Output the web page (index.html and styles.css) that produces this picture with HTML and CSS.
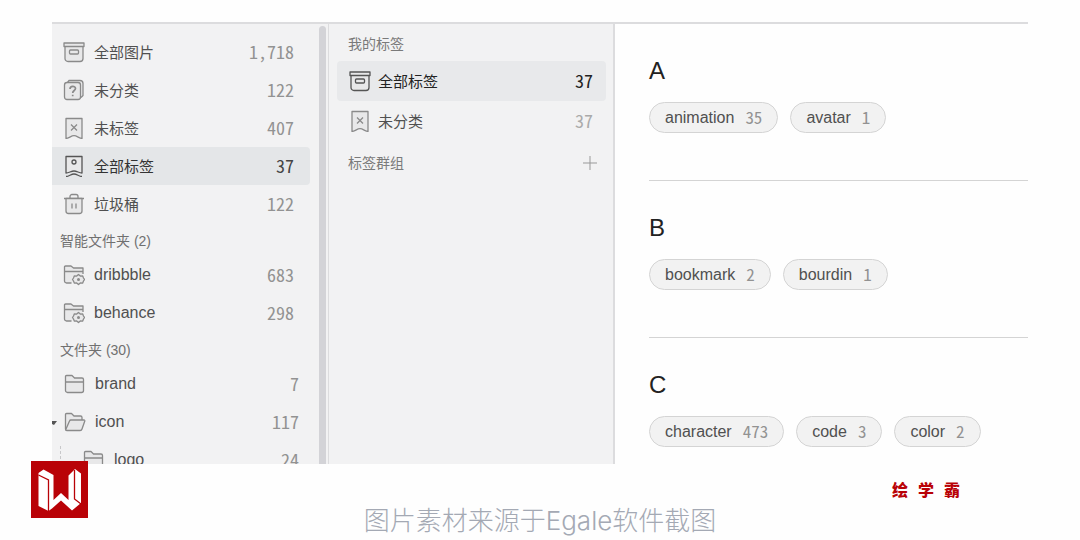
FILE: index.html
```html
<!DOCTYPE html>
<html lang="zh-CN">
<head>
<meta charset="utf-8">
<title>全部标签</title>
<link rel="stylesheet" href="styles.css">
</head>
<body>
<svg class="defs" aria-hidden="true">
  <symbol id="archive" viewBox="0 0 22 22"><path d="M1 2h20v3.500H1zM2 5.500h18v12a3 3 0 0 1-3 3H5a3 3 0 0 1-3-3z"/><rect class="bare" x="6.500" y="9" width="9" height="4" rx="1"/></symbol>
  <symbol id="question" viewBox="0 0 22 22"><path d="M4.500 3.500 6 1.500h11a3 3 0 0 1 3 3v12l-2 2"/><rect x="1.500" y="3.500" width="16" height="17" rx="2.500"/><path class="bare strong" d="M7 10c0-3.500 5.500-3.500 5.500-.5 0 2-2.800 2-2.800 4.500M9.700 15.800v1.400"/></symbol>
  <symbol id="untagged" viewBox="0 0 22 22"><path d="M3 1.500h16v20c-3-.2-5-2.800-8-2.800s-5 2.600-8 2.800z"/><path class="bare" d="m8 7.500 6 6m0-6-6 6"/></symbol>
  <symbol id="tag" viewBox="0 0 22 22"><path d="M3 1.500h16v16.500c-3 0-5-2-8-2s-5 2-8 2z"/><circle class="bare" cx="11" cy="7" r="2"/><path class="bare" d="M3 21.500c3 0 5-2.500 8-2.500s5 2.500 8 2.500"/></symbol>
  <symbol id="trash" viewBox="0 0 22 22"><path class="bare" d="M1 5.500h20M7 5V3.500a2 2 0 0 1 2-2h4a2 2 0 0 1 2 2V5"/><path d="M3 5.500h16V18a2.500 2.500 0 0 1-2.500 2.500h-11A2.500 2.500 0 0 1 3 18z"/><path class="bare" d="M9 10.500v5m4-5v5"/></symbol>
  <symbol id="smart" viewBox="0 0 22 22"><path d="M8.500 19H3.500a2 2 0 0 1-2-2V3a1 1 0 0 1 1-1H8l2.500 2H20v6M1.500 7.500H20"/><path d="m15.500 10.500 1.800 1.600 2.300-.3.900 2.200 1 1.500-1 1.500-.9 2.200-2.300-.3-1.800 1.600-1.800-1.600-2.300.3-.9-2.200-1-1.500 1-1.500.9-2.200 2.300.3z"/><circle class="dot" cx="15.500" cy="15.500" r="1.500"/></symbol>
  <symbol id="folder" viewBox="0 0 22 22"><path d="M1.500 5V3.500a1 1 0 0 1 1-1H8L10.500 5H18a1.500 1.500 0 0 1 1.500 1.500V17.500a2 2 0 0 1-2 2h-14a2 2 0 0 1-2-2zM1.500 9h18"/></symbol>
  <symbol id="open" viewBox="0 0 22 22"><path d="M2.500 19.500a1.500 1.500 0 0 1-1-1.500V3.500a1 1 0 0 1 1-1h5L10 5H16.500a1.500 1.500 0 0 1 1.500 1.500V9"/><path d="M7 9h13a.8.8 0 0 1 .8 1L18 18a2 2 0 0 1-2 1.500H3a1 1 0 0 1-1-1.500L5.500 10A1.500 1.500 0 0 1 7 9z"/></symbol>
</svg>

<main class="app">
  <nav class="sidebar" aria-label="图库">
    <a class="row" href="#all"><svg class="icon"><use href="#archive"/></svg><span class="label">全部图片</span><span class="count">1,718</span></a>
    <a class="row" href="#uncategorized"><svg class="icon"><use href="#question"/></svg><span class="label">未分类</span><span class="count">122</span></a>
    <a class="row" href="#untagged-items"><svg class="icon"><use href="#untagged"/></svg><span class="label">未标签</span><span class="count">407</span></a>
    <a class="row row-active" href="#tags" aria-current="page"><svg class="icon"><use href="#tag"/></svg><span class="label">全部标签</span><span class="count">37</span></a>
    <a class="row" href="#bin"><svg class="icon"><use href="#trash"/></svg><span class="label">垃圾桶</span><span class="count">122</span></a>
    <h2 class="heading">智能文件夹 (2)</h2>
    <a class="row row-latin" href="#dribbble"><svg class="icon"><use href="#smart"/></svg><span class="label">dribbble</span><span class="count">683</span></a>
    <a class="row row-latin" href="#behance"><svg class="icon"><use href="#smart"/></svg><span class="label">behance</span><span class="count">298</span></a>
    <h2 class="heading">文件夹 (30)</h2>
    <a class="row row-latin row-folder" href="#brand"><svg class="icon"><use href="#folder"/></svg><span class="label">brand</span><span class="count">7</span></a>
    <a class="row row-latin row-folder" href="#icon"><svg class="caret" viewBox="0 0 5 5"><path d="M0 0h5L2 4 0 3z"/></svg><svg class="icon"><use href="#open"/></svg><span class="label">icon</span><span class="count">117</span></a>
    <a class="row row-latin row-folder row-child" href="#logo"><svg class="icon"><use href="#folder"/></svg><span class="label">logo</span><span class="count">24</span></a>
    <span class="scrollbar"></span>
  </nav>

  <nav class="groups" aria-label="标签">
    <h2 class="group-heading group-first">我的标签</h2>
    <a class="group-row group-active" href="#all-tags" aria-current="page"><svg class="icon"><use href="#archive"/></svg><span class="label">全部标签</span><span class="count">37</span></a>
    <a class="group-row" href="#loose-tags"><svg class="icon"><use href="#untagged"/></svg><span class="label">未分类</span><span class="count">37</span></a>
    <div class="group-bar"><h2 class="group-heading">标签群组</h2><button class="add" type="button" aria-label="新建标签群组"><svg viewBox="0 0 14 14"><path d="M7 0v14M0 7h14"/></svg></button></div>
  </nav>

  <div class="content">
    <section class="letter">
      <h2 class="initial">A</h2>
      <div class="tags">
        <button class="pill" type="button">animation <span class="pill-count">35</span></button>
        <button class="pill" type="button">avatar <span class="pill-count">1</span></button>
      </div>
    </section>
    <section class="letter">
      <h2 class="initial">B</h2>
      <div class="tags">
        <button class="pill" type="button">bookmark <span class="pill-count">2</span></button>
        <button class="pill" type="button">bourdin <span class="pill-count">1</span></button>
      </div>
    </section>
    <section class="letter">
      <h2 class="initial">C</h2>
      <div class="tags">
        <button class="pill" type="button">character <span class="pill-count">473</span></button>
        <button class="pill" type="button">code <span class="pill-count">3</span></button>
        <button class="pill" type="button">color <span class="pill-count">2</span></button>
      </div>
    </section>
  </div>
</main>

<footer class="footer">
  <svg class="logo" viewBox="0 0 57 57" role="img" aria-label="W">
    <path class="logo-bg" d="M0 0h57v57H0z"/>
    <path class="logo-mark" d="M7.500 12 12.500 8.500 22.500 14v25L30 32l7.500 7V14.500l6.500-6.500 6 4.500V42L41 49.500l-11-10-9 8-3.500 2.500L7.500 45z"/>
    <path class="logo-cut" d="M7.500 14 17.500 19v31M43.500 9v29l6.500 5"/>
  </svg>
  <p class="brand"><span>绘</span><span>学</span><span>霸</span></p>
  <p class="caption">图片素材来源于Egale软件截图</p>
</footer>
</body>
</html>
```
FILE: styles.css
```css
* { box-sizing: border-box; }

body {
  display: flex;
  flex-direction: column;
  height: 100vh;
  margin: 0;
  background: #fefefe;
  color: #505050;
  font-family: "Liberation Sans", "Noto Sans CJK SC", sans-serif;
}

h2, p { margin: 0; font-weight: 400; }
a { color: inherit; text-decoration: none; }
.defs { position: absolute; width: 0; height: 0; }

.app {
  display: grid;
  grid-template-columns: 277px 286px 1fr;
  flex: 1;
  min-height: 0;
  margin: 22px 52px 0;
  border-top: 2px solid #dcdcde;
  overflow: hidden;
}

.sidebar {
  position: relative;
  min-height: 0;
  padding: 9px 18px 0 0;
  border-right: 1px solid #dcdcde;
  background: #f2f2f3;
  overflow: hidden;
}

.scrollbar {
  position: absolute;
  top: 2px;
  right: 2px;
  bottom: 0;
  width: 7px;
  border-radius: 4px 4px 0 0;
  background: #d3d3d7;
}

.row, .group-row {
  position: relative;
  display: flex;
  align-items: center;
  gap: 9px;
  height: 38px;
  padding: 0 16px 0 11px;
  font-size: 15px;
}
.row-latin { font-size: 16px; }
.row-folder { padding: 0 11px 0 12px; }
.row-child { padding-left: 31px; }
.row-child::before {
  content: "";
  position: absolute;
  top: 5px;
  bottom: 0;
  left: 8px;
  border-left: 1px dashed #c8c8ca;
}
.row-active {
  border-radius: 0 4px 4px 0;
  background: #e4e6e8;
  color: #333;
}

.icon {
  flex: none;
  width: 22px;
  height: 22px;
  fill: #e8e8e9;
  stroke: #8a8a8a;
  stroke-width: 1.3;
  stroke-linejoin: round;
}
.bare { fill: none; }
.strong { stroke-width: 1.7; }
.dot { fill: #8a8a8a; stroke: none; }
.row-active .icon, .group-active .icon { stroke: #555; }

.caret {
  position: absolute;
  top: 18px;
  left: 0;
  width: 5px;
  height: 5px;
  fill: #555;
}

.label { flex: 1; padding-bottom: 1px; }
.row-latin .label { padding-bottom: 0; }
.count, .pill-count {
  padding-bottom: 2px;
  color: #929292;
  font-family: "Noto Sans Mono CJK SC", "DejaVu Sans Mono", monospace;
  font-weight: 300;
}
.count { font-size: 18px; line-height: 24px; }
.row-active .count { color: #444; }

.heading {
  height: 33px;
  padding: 2px 0 0 8px;
  color: #707070;
  font-size: 14px;
  line-height: 32px;
}

.groups {
  padding: 5px 7px 0 8px;
  border-right: 2px solid #dcdcde;
  background: #f2f2f3;
}
.group-heading { padding-left: 11px; color: #7a7a7a; font-size: 14px; line-height: 30px; }
.group-first { margin-bottom: 2px; }
.group-row { gap: 7px; height: 40px; padding: 0 13px 0 12px; }
.group-row .count { color: #aaa; }
.group-active { border-radius: 4px; background: #e8e9eb; color: #222; }
.group-active .count { color: #222; font-weight: 400; }
.group-bar {
  display: flex;
  align-items: center;
  justify-content: space-between;
  padding: 7px 9px 0 0;
}
.add { width: 14px; height: 14px; padding: 0; border: 0; background: none; }
.add svg { display: block; stroke: #999; }

.content { padding-left: 34px; background: #fefefe; }
.letter { padding: 33px 0 47px; border-bottom: 1px solid #d4d4d4; }
.initial { margin-bottom: 17px; color: #222; font-size: 24px; line-height: 28px; }
.tags { display: flex; gap: 12px; }
.pill {
  display: flex;
  align-items: center;
  gap: 11px;
  height: 31px;
  padding: 0 15px;
  border: 1px solid #d4d4d4;
  border-radius: 16px;
  background: #f2f2f2;
  color: #505050;
  font-family: inherit;
  font-size: 16px;
}
.pill-count { font-size: 17px; line-height: 20px; }

.footer { position: relative; height: 76px; background: #fefefe; }
.logo { position: absolute; top: -3px; left: 31px; width: 57px; height: 57px; }
.logo-bg { fill: #b90207; }
.logo-mark { fill: #fff; }
.logo-cut { fill: none; stroke: #b90207; stroke-width: 1.3; }
.brand {
  display: flex;
  justify-content: flex-end;
  gap: 10px;
  padding: 13px 120px 0 0;
  color: #b90207;
  font-family: "Noto Sans CJK SC", sans-serif;
  font-size: 16px;
  font-weight: 900;
  line-height: 24px;
}
.caption {
  color: #a4a9b4;
  font-family: Inter, "Noto Sans CJK SC", sans-serif;
  font-size: 26px;
  font-weight: 300;
  line-height: 40px;
  text-align: center;
}
```
